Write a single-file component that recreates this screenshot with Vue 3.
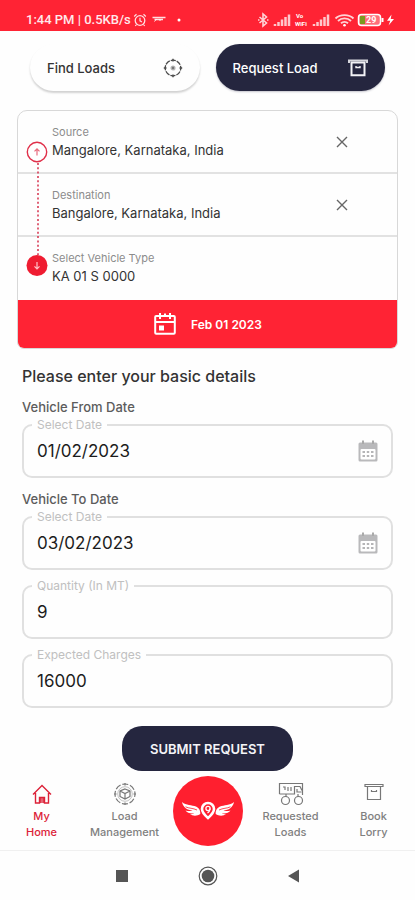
<script setup>
import { ref } from 'vue'

const stops = ref([
  { id: 'source', label: 'Source', value: 'Mangalore, Karnataka, India', clearable: true },
  { id: 'destination', label: 'Destination', value: 'Bangalore, Karnataka, India', clearable: true },
  { id: 'vehicle', label: 'Select Vehicle Type', value: 'KA 01 S 0000', clearable: false },
])
const fields = ref([
  { id: 'from', heading: 'Vehicle From Date', label: 'Select Date', value: '01/02/2023' },
  { id: 'to', heading: 'Vehicle To Date', label: 'Select Date', value: '03/02/2023' },
  { id: 'quantity', label: 'Quantity (In MT)', value: '9' },
  { id: 'charges', label: 'Expected Charges', value: '16000' },
])
</script>

<template>
  <div class="screen">
    <header class="status">
      <span class="status-text">1:44 PM | 0.5KB/s</span>
      <svg class="s-left" width="52" height="14" viewBox="0 0 52 14" fill="none" stroke="#fff" stroke-opacity=".85" aria-hidden="true">
        <circle cx="7" cy="7.500" r="4.800" stroke-width="1.300" />
        <path d="M7 4.800V7.800L9 9M1.200 3.500L3.500 1.300M10.500 1.300L12.800 3.500M3.500 11.500L2.300 13M10.500 11.500L11.700 13" stroke-width="1.200" />
        <path d="M19.500 4.500H32.500M21.500 6.500H30" stroke-width="1.300" />
        <path d="M23.500 6L21.500 8.500M27 6V8" stroke-width="1" />
        <circle cx="46" cy="7" r="1.500" fill="#fff" stroke="none" />
      </svg>
      <svg class="s-right" width="138" height="16" viewBox="0 0 138 16" fill="none" stroke="#fff" aria-hidden="true">
        <g stroke-opacity=".8">
          <path d="M2.500 5L9.500 11L6 14V2L9.500 5L2.500 11M1 8H2.500M10 8H11.500" stroke-width="1.600" />
          <path d="M18 14V12M21.500 14V10M25 14V7.500M28.500 14V5M32 14V2.500" stroke-width="2.500" stroke-opacity=".75" />
          <path d="M57 14V12M60.500 14V10M64 14V7.500M67.500 14V5M71 14V2.500" stroke-width="2.500" stroke-opacity=".75" />
          <path d="M78.500 6.500C83 2 92 2 96.500 6.500M81 9C84.500 5.500 90.500 5.500 94 9M84 11.300C86 9.500 89 9.500 91 11.300" stroke-width="1.900" />
          <circle cx="87.500" cy="13.300" r="1.300" fill="#fff" stroke="none" />
        </g>
        <rect x="101.500" y="2.500" width="22" height="11" rx="3" stroke-width="1.500" fill="#fff" fill-opacity=".35" />
        <rect x="103" y="4" width="5" height="8" fill="#7a9a1f" stroke="none" />
        <path d="M125.500 6V10" stroke-width="2" />
        <path d="M134.500 2.500L130 8.700H133.300L131.500 13.500L137 6.900H133.700Z" fill="#fff" stroke="none" />
        <g fill="#fff" stroke="none" class="tiny">
          <text x="39" y="6">Vo</text>
          <text x="38" y="14">WiFi</text>
          <text x="109" y="11" class="pct">29</text>
        </g>
      </svg>
    </header>

    <main class="content">
      <nav class="tabs" aria-label="Load mode">
        <button type="button" class="tab">
          <span>Find Loads</span>
          <svg width="20" height="20" viewBox="0 0 20 20" fill="none" stroke="#4a4a4a" aria-hidden="true">
            <circle cx="10" cy="10" r="7.800" stroke-width="1.300" stroke-dasharray="5.100 1.030" stroke-dashoffset="2.550" />
            <path d="M10 .8V3.500M10 16.500V19.200M.8 10H3.500M16.500 10H19.200" stroke-width="1.400" />
            <circle cx="10" cy="10" r="2" fill="#777" stroke="#bbb" stroke-width="1.200" />
          </svg>
        </button>
        <button type="button" class="tab dark">
          <span>Request Load</span>
          <svg width="20" height="20" viewBox="0 0 20 20" fill="none" stroke="#f2f2f6" aria-hidden="true">
            <path d="M1 5V2.500H19V5" stroke="#d6d6dc" stroke-width="2" />
            <path d="M3.500 4.500H16.500V17.200H3.500Z" stroke-width="2" />
            <path d="M8 8V9.500H12V8" stroke-width="1.400" />
          </svg>
        </button>
      </nav>

      <section class="trip">
        <div v-for="s in stops" :key="s.id" class="stop">
          <div class="stop-text">
            <label :for="s.id">{{ s.label }}</label>
            <input :id="s.id" v-model="s.value" type="text" />
          </div>
          <button v-if="s.clearable" type="button" class="clear" :aria-label="'Clear ' + s.label" @click="s.value = ''">
            <svg width="12" height="12" viewBox="0 0 12 12" stroke="#666" stroke-width="1.400" aria-hidden="true">
              <path d="M1 1L11 11M11 1L1 11" />
            </svg>
          </button>
        </div>
        <svg class="route" width="22" height="136" viewBox="0 0 22 136" fill="none" aria-hidden="true">
          <path d="M12 22V114" stroke="#d83b55" stroke-width="1.600" stroke-dasharray="2 2.300" />
          <circle cx="11" cy="11" r="9.700" fill="#fff" stroke="#e0304a" stroke-width="1.400" />
          <path d="M11 14.500V8M8.500 10.300L11 7.800L13.500 10.300" stroke="#e86a7c" stroke-width="1.200" />
          <circle cx="11" cy="124.500" r="10.500" fill="#ef1c31" />
          <path d="M11 121V127.500M8.500 125.300L11 127.800L13.500 125.300" stroke="#ffc3c9" stroke-width="1.200" />
        </svg>
        <button type="button" class="day">
          <svg width="24" height="24" viewBox="0 0 24 24" fill="none" stroke="#fff" aria-hidden="true">
            <rect x="2.200" y="4" width="19.600" height="17.800" rx="1" stroke-width="2" />
            <path d="M2 10H22" stroke-width="2" />
            <path d="M7 1V7M17 1V7M12 1.500V4" stroke-width="2" />
            <rect x="6" y="13.500" width="5" height="5" fill="#fff" stroke="none" />
          </svg>
          <span>Feb 01 2023</span>
        </button>
      </section>

      <form class="details" @submit.prevent>
        <h1>Please enter your basic details</h1>

        <template v-for="f in fields" :key="f.id">
          <h2 v-if="f.heading">{{ f.heading }}</h2>
          <div class="field" :class="{ spaced: !f.heading }">
            <label :for="f.id">{{ f.label }}</label>
            <input :id="f.id" v-model="f.value" type="text" />
            <svg v-if="f.heading" width="20" height="22" viewBox="0 0 20 22" aria-hidden="true">
              <path d="M2 2.500H18Q19.500 2.500 19.500 4V20Q19.500 21.500 18 21.500H2Q.5 21.500 .5 20V4Q.5 2.500 2 2.500Z" fill="#b9b9bb" />
              <path d="M5 .5V4M15 .5V4" stroke="#aaa" stroke-width="2" />
              <rect x="2.500" y="9" width="15" height="10.500" rx="1" fill="#fff" />
              <path d="M4.500 12H7M8.800 12H11.200M13 12H15.500M4.500 16H7M8.800 16H11.200M13 16H15.500" stroke="#b5b5b7" stroke-width="2" />
            </svg>
          </div>
        </template>

        <button type="submit" class="submit">SUBMIT REQUEST</button>
      </form>
    </main>

    <nav class="bottom" aria-label="Main">
      <a href="#home" class="item active">
        <svg width="24" height="24" viewBox="0 0 24 24" fill="none" stroke="#dc2238" stroke-width="1.400" aria-hidden="true">
          <path d="M3 12.500L12 3.500L21 12.500M5.500 11V21H9.500V15.500H14.500V21H18.500V11M11 21V16M13 21V16" />
        </svg>
        <span>My<br />Home</span>
      </a>
      <a href="#management" class="item">
        <svg width="24" height="24" viewBox="0 0 24 24" fill="none" stroke="#777" stroke-width="1.200" aria-hidden="true">
          <circle cx="12" cy="12" r="10" stroke-dasharray="6 1.850" stroke-dashoffset="3" />
          <path d="M12 7L17 9V14.500L12 17L7 14.500V9ZM7 9L12 11.500L17 9M12 11.500V17" />
          <path d="M12 1V3.500M12 20.500V23M1 12H3.500M20.500 12H23" />
          <circle cx="12" cy="12" r="7.300" stroke="#b4b4b4" stroke-width=".8" />
        </svg>
        <span>Load<br />Management</span>
      </a>
      <a href="#brand" class="brand" aria-label="Dashboard">
        <svg width="56" height="24" viewBox="0 0 56 24" aria-hidden="true">
          <g fill="#fff">
            <path d="M2 3C6 6.500 12 6 16 7.500C19.500 9 20.500 12 20.300 15C17 17.500 12.500 17 10 15.300C12 15.300 13 15 14 14.300C10.500 14.800 7 13.800 5.500 11.500C8 12.300 11 12.200 12.500 11.500C7.500 11.200 3 8.500 2 3Z" />
            <path d="M54 3C50 6.500 44 6 40 7.500C36.500 9 35.500 12 35.700 15C39 17.500 43.500 17 46 15.300C44 15.300 43 15 42 14.300C45.500 14.800 49 13.800 50.500 11.500C48 12.300 45 12.200 43.500 11.500C48.500 11.200 53 8.500 54 3Z" />
          </g>
          <path d="M5.500 7.800C9 9.500 13 9 17 11M50.500 7.800C47 9.500 43 9 39 11" fill="none" stroke="#ff1f2f" stroke-width=".8" />
          <path d="M28 19C24 15.500 22 13 22 10A6 6 0 0 1 34 10C34 13 32 15.500 28 19Z" fill="none" stroke="#fff" stroke-width="2.600" />
          <circle cx="28" cy="9.500" r="2.100" fill="none" stroke="#fff" stroke-width="1.300" />
          <path d="M29.800 9.500Q30 12.500 27.500 14" fill="none" stroke="#fff" stroke-width="1.200" />
        </svg>
      </a>
      <a href="#requested" class="item">
        <svg width="26" height="24" viewBox="0 0 26 24" fill="none" stroke="#777" stroke-width="1.200" aria-hidden="true">
          <path d="M1.500 12V1.500H24.500V13M1.500 12H16.500V4.500H22L24 8.500M5 5H7V8M10 5V9M13 5V9M19 7V10H23.500" />
          <path d="M8 12V15M20 12V15" />
          <circle cx="7.500" cy="18.500" r="4" />
          <circle cx="20.500" cy="18.500" r="4" />
        </svg>
        <span>Requested<br />Loads</span>
      </a>
      <a href="#book" class="item">
        <svg width="24" height="24" viewBox="0 0 24 24" fill="none" stroke="#777" stroke-width="1.200" aria-hidden="true">
          <path d="M3 5V2.500H21V5M3 4.500H21M5.500 5V17.500H18.500V5M9.500 8V9.500H14.500V8" />
        </svg>
        <span>Book<br />Lorry</span>
      </a>
    </nav>

    <footer class="system">
      <button type="button" aria-label="Recents"><svg width="20" height="20" viewBox="0 0 20 20"><rect x="4" y="4" width="12" height="12" fill="#555" /></svg></button>
      <button type="button" aria-label="Home"><svg width="20" height="20" viewBox="0 0 20 20"><circle cx="10" cy="10" r="8.800" fill="none" stroke="#555" stroke-width="1.200" /><circle cx="10" cy="10" r="6.300" fill="#555" /></svg></button>
      <button type="button" aria-label="Back"><svg width="20" height="20" viewBox="0 0 20 20"><path d="M15 3.500V16.500L4 10Z" fill="#555" /></svg></button>
    </footer>
  </div>
</template>

<style>
body {
  background: #fefefe;
}
</style>

<style scoped>
.screen {
  min-height: 100vh;
  display: flex;
  flex-direction: column;
  font-family: Inter, "Open Sans", sans-serif;
  color: #333;
  background: #fefefe;
}
button,
input {
  font: inherit;
  color: inherit;
  border: 0;
  padding: 0;
  background: none;
}
svg {
  display: block;
  flex: none;
}
.status {
  height: 31px;
  box-sizing: border-box;
  padding: 8px 20px 0 26px;
  display: flex;
  align-items: center;
  background: #ff2334;
  color: #ffe9eb;
}
.status-text {
  font: 500 13px/22px Roboto, sans-serif;
  white-space: nowrap;
}
.s-left {
  margin-left: 2px;
}
.s-right {
  margin-left: auto;
}
.tiny {
  font: 700 6px Roboto, sans-serif;
}
.pct {
  font-size: 9px;
}
.content {
  flex: 1;
}
.tabs {
  display: flex;
  gap: 16px;
  padding: 13px 30px 19px;
}
.tab {
  flex: 1;
  height: 47px;
  padding: 0 17px;
  display: flex;
  align-items: center;
  justify-content: space-between;
  border-radius: 24px;
  background: #fefefe;
  font-size: 13px;
  font-weight: 500;
  box-shadow: 0 2px 2px #d2d2d2;
}
.tab.dark {
  background: #25263f;
  color: #fff;
  box-shadow: 0 1px 2px #c4c4cc;
}
.trip {
  position: relative;
  margin: 0 17px;
  border: 1px solid #d8d8d8;
  border-radius: 10px 10px 7px 7px;
  overflow: hidden;
}
.stop {
  height: 63px;
  box-sizing: border-box;
  padding: 12px 48px 0 34px;
  display: flex;
  border-bottom: 2px solid #e2e2e2;
}
.stop:nth-child(3) {
  border-bottom: 0;
}
.stop-text {
  flex: 1;
  display: flex;
  flex-direction: column;
}
.stop label {
  font-size: 11px;
  line-height: 18px;
  color: #8c8c8c;
}
.stop input {
  width: 100%;
  height: 18px;
  font-size: 13px;
}
.clear {
  width: 14px;
  height: 38px;
  display: grid;
  place-items: center;
}
.route {
  position: absolute;
  left: 8px;
  top: 30px;
}
.day {
  width: 100%;
  height: 48px;
  display: flex;
  align-items: center;
  justify-content: center;
  gap: 14px;
  background: #ff2334;
  color: #fff;
  font-size: 12px;
  font-weight: 600;
}
.details {
  margin: 0 22px;
  padding-top: 16px;
  display: flex;
  flex-direction: column;
}
h1 {
  margin: 0 0 11px;
  font-size: 16px;
  line-height: 22px;
  font-weight: 500;
}
h2 {
  margin: 0 0 8px;
  font-size: 13px;
  line-height: 18px;
  font-weight: 500;
  color: #5c5c5c;
}
.field {
  position: relative;
  height: 54px;
  box-sizing: border-box;
  margin-bottom: 12px;
  padding: 0 13px;
  display: flex;
  align-items: center;
  border: 2px solid #e0e0e0;
  border-radius: 10px;
}
.field.spaced {
  margin: 3px 0 12px;
}
.field label {
  position: absolute;
  left: 8px;
  top: -9px;
  padding: 0 5px;
  background: #fefefe;
  font-size: 12px;
  line-height: 16px;
  color: #c0c0c0;
}
.field input {
  flex: 1;
  min-width: 0;
  height: 48px;
  font-size: 17px;
  color: #1c1c1c;
}
.submit {
  align-self: center;
  height: 45px;
  margin-top: 6px;
  padding: 0 28px;
  border-radius: 20px;
  background: #25263f;
  color: #f4f4f8;
  font-size: 13px;
  font-weight: 600;
}
.bottom {
  height: 79px;
  display: grid;
  grid-template-columns: repeat(5, minmax(0, 1fr));
  border-bottom: 1px solid #f0f0f0;
}
.item {
  padding-top: 11px;
  display: flex;
  flex-direction: column;
  align-items: center;
  gap: 2px;
  color: #808080;
  font-size: 11px;
  line-height: 16px;
  font-weight: 500;
  text-align: center;
  text-decoration: none;
}
.item.active {
  color: #dc2238;
}
.brand {
  align-self: center;
  justify-self: center;
  width: 70px;
  height: 70px;
  display: grid;
  place-items: center;
  border-radius: 50%;
  background: #ff1f2f;
}
.system {
  height: 49px;
  display: flex;
  align-items: center;
  justify-content: center;
  gap: 66px;
}
</style>
